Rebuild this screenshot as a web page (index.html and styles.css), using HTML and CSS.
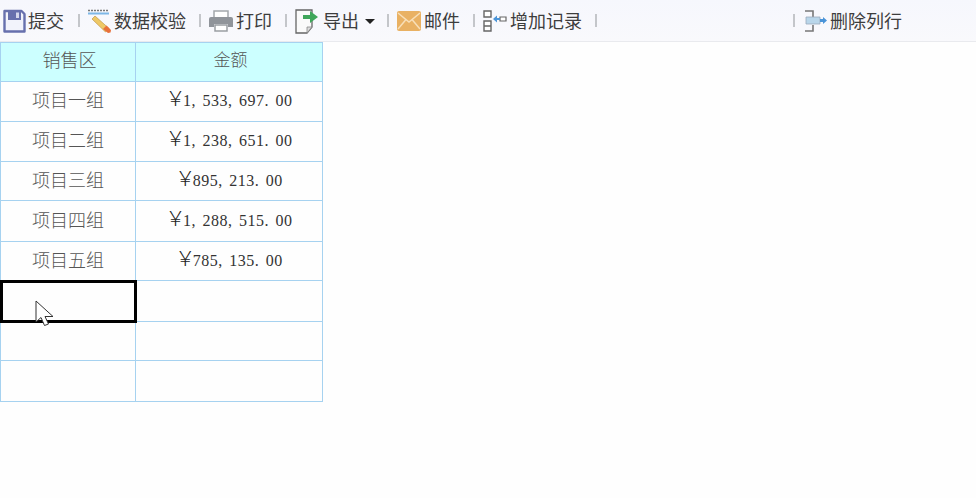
FILE: index.html
```html
<!DOCTYPE html>
<html lang="zh">
<head>
<meta charset="utf-8">
<title>销售区</title>
<link rel="stylesheet" href="styles.css">
</head>
<body>
<div class="toolbar">
  <div class="tool tool-first">
    <svg class="ico" width="23" height="24" viewBox="0 0 23 24"><path d="M1.500 2h17l3 3v17.500h-20z" fill="#f2f3fb" stroke="#6770ad" stroke-width="2.400" stroke-linejoin="round"/><path d="M5 2h13v9H5z" fill="#6770ad"/><path d="M13 3.500h3v5.500h-3z" fill="#d4d7ec"/></svg>
    <span>提交</span>
  </div>
  <i class="sep"></i>
  <div class="tool">
    <svg class="ico" width="23" height="24" viewBox="0 0 23 24"><path d="M0 1.500h21" stroke="#777" stroke-width="1.500" stroke-dasharray="2 1"/><path d="M0 4.500h21" stroke="#7db7e6" stroke-width="2"/><path d="M7 7l14 12.500-3.500 3.500L4 10z" fill="#eec866" stroke="#b98c3a" stroke-width=".6"/><path d="M18.500 16.500L23 21l-.5 2.500-2.500.5-5-4z" fill="#e8703a"/></svg>
    <span>数据校验</span>
  </div>
  <i class="sep"></i>
  <div class="tool">
    <svg class="ico" width="24" height="22" viewBox="0 0 24 22"><path d="M5 1h14v7H5z" fill="#fff" stroke="#a4a8ac" stroke-width="1.500"/><path d="M2 7h20a2 2 0 0 1 2 2v8h-5v-3H5v3H0V9a2 2 0 0 1 2-2z" fill="#90949a"/><path d="M6 15h12v6H6z" fill="#fff" stroke="#9a9ea3" stroke-width="1.500"/></svg>
    <span>打印</span>
  </div>
  <i class="sep"></i>
  <div class="tool tool-export">
    <svg class="ico" width="24" height="26" viewBox="0 0 24 26"><path d="M1 2h16v17l-5 6H1z" fill="#fafafa" stroke="#666" stroke-width="1.300"/><path d="M17 19h-5v6z" fill="#ddd" stroke="#888" stroke-width=".8"/><path d="M8 7h7V3l8 6-8 6v-4H8z" fill="#3fa65a"/></svg>
    <span>导出</span>
    <i class="caret"></i>
  </div>
  <i class="sep"></i>
  <div class="tool">
    <svg class="ico" width="24" height="20" viewBox="0 0 24 20"><rect width="24" height="20" rx="2" fill="#e9b163"/><path d="M1 2l11 9 11-9M1 18l8-9.500M23 18l-8-9.500" fill="none" stroke="#f8dfb8" stroke-width="1.500"/></svg>
    <span>邮件</span>
  </div>
  <i class="sep"></i>
  <div class="tool">
    <svg class="ico" width="24" height="22" viewBox="0 0 24 22"><path d="M1 1h7v6H1zM1 11h7v5H1zM1 16h7v5H1z" fill="#fff" stroke="#666" stroke-width="1.400"/><path d="M17 7h6v4h-6z" fill="#fff" stroke="#666" stroke-width="1.200"/><path d="M10 9l4-3.500v7z" fill="#4a94d8"/><path d="M13 8h4v2h-4z" fill="#4a94d8"/></svg>
    <span>增加记录</span>
  </div>
  <i class="sep"></i>
  <div class="spacer"></div>
  <i class="sep sep-end"></i>
  <div class="tool">
    <svg class="ico" width="22" height="22" viewBox="0 0 22 22"><path d="M0 1h8v6M0 21h8v-6" fill="none" stroke="#777" stroke-width="1.600"/><path d="M1 7h14v7H1z" fill="#b9d6ea" stroke="#9ab" stroke-width=".8"/><path d="M15 9h3V7l4 3.500-4 3.500v-2h-3z" fill="#4a94d8"/></svg>
    <span>删除列行</span>
  </div>
</div>
<table class="sheet">
  <colgroup><col class="col-a"><col class="col-b"></colgroup>
  <thead>
    <tr class="row-head"><th class="th-a">销售区</th><th class="th-b">金额</th></tr>
  </thead>
  <tbody>
    <tr class="h40"><td>项目一组</td><td class="money"><span class="yen">￥</span>1<span class="p">,</span>533<span class="p">,</span>697<span class="p">.</span>00</td></tr>
    <tr class="h40"><td>项目二组</td><td class="money"><span class="yen">￥</span>1<span class="p">,</span>238<span class="p">,</span>651<span class="p">.</span>00</td></tr>
    <tr class="h39"><td>项目三组</td><td class="money"><span class="yen">￥</span>895<span class="p">,</span>213<span class="p">.</span>00</td></tr>
    <tr class="h41"><td>项目四组</td><td class="money"><span class="yen">￥</span>1<span class="p">,</span>288<span class="p">,</span>515<span class="p">.</span>00</td></tr>
    <tr class="h39"><td>项目五组</td><td class="money"><span class="yen">￥</span>785<span class="p">,</span>135<span class="p">.</span>00</td></tr>
    <tr class="h41"><td class="selected"></td><td></td></tr>
    <tr class="h39"><td></td><td></td></tr>
    <tr class="h41"><td></td><td></td></tr>
  </tbody>
</table>
<svg class="cursor" width="20" height="28" viewBox="0 0 20 28"><path d="M1 1v21l5-4.500 3.500 8 4-1.500-3.500-7.500H18z" fill="#fff" stroke="#333" stroke-width="1"/></svg>
</body>
</html>
```
FILE: styles.css
```css
html, body {
  margin: 0;
  padding: 0;
  background: #fefefe;
  overflow: hidden;
}
body {
  width: 976px;
  height: 498px;
  position: relative;
  font-family: "Noto Sans CJK SC", "Noto Sans", sans-serif;
}
.toolbar {
  display: flex;
  align-items: center;
  box-sizing: border-box;
  height: 42px;
  padding: 0 74px 0 3px;
  background: linear-gradient(#f6f7fd, #f9f9fc);
  border-bottom: 1px solid #e9eaee;
  color: #3d3d3d;
  font-size: 18px;
  line-height: 24px;
}
.tool {
  display: flex;
  align-items: center;
  gap: 3px;
}
.tool span {
  padding-bottom: 2px;
}
.tool-first {
  gap: 2px;
  padding-right: 1px;
}
.tool-export {
  gap: 4px;
}
.ico {
  display: block;
  flex: none;
}
.caret {
  width: 0;
  height: 0;
  margin-left: 2px;
  margin-top: 2px;
  border-left: 5px solid transparent;
  border-right: 5px solid transparent;
  border-top: 5px solid #222;
}
.sep {
  flex: none;
  width: 2px;
  height: 13px;
  margin: 0 8px 0 13px;
  background: #c4c6ca;
}
.tool-export + .sep {
  margin-left: 12px;
}
.sep-end {
  margin: 0 10px 0 0;
}
.spacer {
  flex: 1;
}
.sheet {
  border-collapse: collapse;
  table-layout: fixed;
  width: 323px;
  font-size: 18px;
  color: #555;
}
.col-a { width: 135px; }
.col-b { width: 187px; }
.sheet th, .sheet td {
  box-sizing: border-box;
  padding: 0 0 6px;
  border: 1px solid #a6d2f0;
  text-align: center;
  vertical-align: middle;
  font-weight: 300;
  line-height: 24px;
}
.sheet .row-head th {
  height: 39px;
  background: #ccffff;
}
.sheet .th-a { padding-left: 3px; }
.sheet .th-b {
  padding-left: 3px;
  font-size: 17px;
}
.h39 td { height: 39px; padding-bottom: 4px; }
.h40 td { height: 40px; }
.h41 td { height: 41px; padding-bottom: 5px; }
.sheet .money {
  padding: 0 0 2px;
  font-family: "Liberation Serif", "Noto Sans CJK SC", serif;
  font-size: 16px;
  letter-spacing: .5px;
  color: #333;
}
.yen {
  font-family: "Noto Sans CJK SC", sans-serif;
  font-size: 20px;
  line-height: 20px;
  letter-spacing: -2.5px;
  color: #222;
}
.p {
  display: inline-block;
  width: 11px;
  text-align: left;
}
.sheet .selected {
  outline: 3px solid #000;
  outline-offset: -2px;
}
.cursor {
  position: absolute;
  left: 35px;
  top: 300px;
}
```
